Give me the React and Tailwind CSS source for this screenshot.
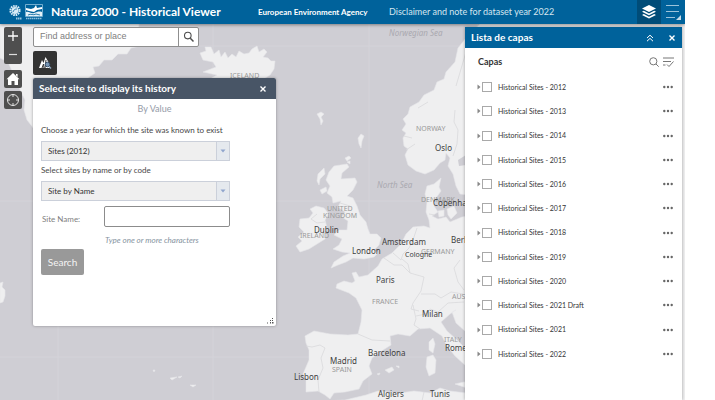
import { useState } from "react";

const UI = "font-['Lato','Open_Sans',sans-serif]";

const LAND = [
  // Greenland
  "M22 24 L139 24 138 34 140 46 131 48 127 54 118 54 112 60 104 60 99 66 93 67 95 73 88 78 86 92 60 100 46 122 36 132 31 125 27 120 24 110 25 100 21 92 16 80 8 62 0 58 0 24Z",
  "M0 283 L3 282 2 287 5 290 5 296 3 302 0 303Z",
  // Iceland
  "M200 53 L206 51 205 47 211 47 214 54 219 50 221 57 225 52 228 58 232 54 236 57 239 51 244 54 249 53 252 49 257 46 259 52 264 49 267 52 263 57 268 58 271 61 275 61 274 69 270 75 262 80 240 88 215 84 210 79 217 75 203 72 216 67 213 62 203 60Z",
  // Faroe, Shetland, Orkney, Azores
  "M317 114 l4 -2 3 2 -3 3 2 4 -2 4 -1 -6z",
  "M358 138 l3 -4 3 2 -2 5 -1 7 -2 -4z",
  "M345 158 l4 -2 2 2 -4 3z M347 162 l3 -1 0 3z",
  "M170 378 l7 -1 -5 3z M178 377 l4 -1 -2 2z M190 385 l6 0 -3 2z M153 370 l2 0 -1 2z",
  // Scandinavia
  "M686 24 L480 24 466 38 458 48 455 62 446 72 444 79 437 82 434 90 424 95 419 102 410 107 408 114 403 119 406 124 402 130 406 133 403 138 404 146 408 149 405 155 408 165 416 171 425 174 434 170 440 163 445 160 446 153 450 158 448 166 453 174 456 186 460 194 480 196 686 190Z",
  // Great Britain
  "M334 166 L347 164 349 167 342 173 341 179 355 178 357 182 353 190 347 196 353 198 357 206 360 215 366 222 368 229 370 234 377 234 381 238 379 245 374 250 378 253 374 257 364 259 353 258 346 262 338 265 331 268 334 262 343 256 350 253 342 252 333 249 339 245 342 239 334 235 339 230 347 230 348 221 342 217 345 212 338 207 341 201 333 203 332 197 327 193 330 186 326 180 329 172Z",
  "M318 174 l6 -6 1 6 -5 5 -1 6 -2 -4z M320 190 l6 -3 1 4 -5 3z",
  // Ireland
  "M310 209 L316 206 324 208 329 214 325 220 327 228 325 239 317 244 309 249 300 252 296 246 302 241 298 237 304 232 299 227 300 219 309 218 313 213Z",
  // Denmark and the continent
  "M427 186 L434 184 441 178 439 187 441 191 436 198 434 206 438 212 432 216 438 219 446 217 450 222 462 217 480 214 480 330 466 332 456 323 452 312 456 310 450 314 441 322 447 331 456 339 469 352 480 360 480 376 466 366 455 356 447 346 442 336 430 328 418 329 410 336 398 334 390 336 391 345 383 350 372 358 369 366 372 374 363 381 359 389 345 392 334 393 330 399 325 395 318 391 306 392 306 380 303 374 309 360 309 350 306 343 305 336 314 331 330 334 348 335 358 334 361 322 362 310 356 298 349 293 336 288 337 284 344 281 352 283 355 281 352 273 356 272 359 277 368 275 378 266 382 259 392 253 401 244 406 234 413 227 424 226 430 228 429 220 426 212 427 202 425 194Z",
  "M447 209 l7 -3 3 7 -6 6 -3 -4z M438 211 l6 -1 0 6 -5 1z",
  // Islands of the Mediterranean
  "M429 342 l4 -4 2 6 -2 9 -4 -3z M427 357 l6 -2 3 5 -1 13 -6 3 -3 -9z",
  "M385 370 l7 -3 2 3 -5 3z M396 366 l3 0 0 2z M377 374 l3 -1 -1 2z M455 384 l9 -2 20 1 -6 9 -14 -5z",
  // North Africa
  "M322 401 L345 400 366 395 378 391 400 393 414 391 430 393 440 388 450 391 466 393 480 401Z",
  "M679 24 L686 24 686 401 679 401Z",
];

const BORDERS =
  "M455 110 l-1 12 4 8 -1 14 -4 12 M317 214 l-6 5 6 4 8 -1 M340 203 l10 3 M384 258 l10 7 8 0 8 8 14 4 -3 14 -8 12 -2 6 8 2 M393 253 l8 7 2 -6 6 -6 4 -8 4 -12 M410 273 l-2 -9 -6 -5 M421 294 l14 0 6 4 10 -6 12 2 M413 305 l3 14 -2 6 6 4 M416 316 l10 -2 4 -5 8 3 10 -9 16 -1 M460 260 l-6 8 4 14 6 8 M306 346 l6 1 8 -2 5 3 -4 10 2 10 -5 12 1 12 M358 334 l14 6 18 1 M424 392 l-2 9 M478 24 l-12 28 -10 34 M429 214 l6 1 M418 108 l10 -6 M404 136 l8 2 M406 150 l9 -6";

const COUNTRIES = [
  ["ICELAND", 230, 78], ["NORWAY", 416, 131], ["UNITED", 327, 211], ["KINGDOM", 323, 218],
  ["IRELAND", 300, 238], ["DENMARK", 421, 202], ["GERMANY", 421, 254], ["FRANCE", 372, 304],
  ["AUSTRIA", 452, 299], ["ITALY", 444, 342], ["SPAIN", 332, 372],
];

const CITIES = [
  ["Oslo", 435, 151], ["Copenhagen", 433, 206], ["Dublin", 314, 233], ["London", 352, 254],
  ["Amsterdam", 382, 245], ["Berlin", 451, 243], ["Paris", 376, 283], ["Milan", 422, 317],
  ["Rome", 445, 351], ["Barcelona", 368, 356], ["Madrid", 330, 364], ["Lisbon", 294, 380],
  ["Algiers", 378, 397], ["Tunis", 430, 397],
];

const LAYERS = [
  "2012", "2013", "2014", "2015", "2016", "2017", "2018", "2019", "2020", "2021 Draft", "2021", "2022",
];

function BaseMap() {
  return (
    <svg
      className="absolute inset-0 h-full w-full font-['Noto_Sans',sans-serif]"
      viewBox="0 24 685 376"
      preserveAspectRatio="xMidYMin slice"
      aria-label="Map of Europe"
    >
      <rect y="24" width="685" height="376" fill="#cfced4" />
      <path d="M58 24V400M213 24V400M369 24V400M0 46H685M0 201H685M0 357H685" stroke="#d4d3d9" fill="none" />
      {LAND.map((d) => (
        <path key={d} d={d} fill="#efeff0" stroke="#e6e6e9" strokeWidth="0.6" strokeLinejoin="round" />
      ))}
      <path d={BORDERS} fill="none" stroke="#d9d9dc" strokeWidth="0.8" strokeLinejoin="round" />
      <path d="M458 160 l8 -5 v10 l-7 1z" fill="#cfced4" />
      <g fontSize="7" fill="#999">
        {COUNTRIES.map(([name, x, y]) => (
          <text key={name} x={x} y={y}>{name}</text>
        ))}
      </g>
      <g fontSize="8" fill="#aaa9b0" fontStyle="italic">
        <text x="389" y="36">Norwegian Sea</text>
        <text x="377" y="188">North Sea</text>
      </g>
      <g fontSize="8" fill="#404040">
        {CITIES.map(([name, x, y]) => (
          <text key={name} x={x} y={y}>{name}</text>
        ))}
        <text x="405" y="257" fontSize="7">Cologne</text>
      </g>
    </svg>
  );
}

function Logos() {
  return (
    <svg className="h-4 w-9 shrink-0" viewBox="0 0 36 16" fill="none" aria-label="EEA and Natura 2000">
      <circle cx="7" cy="6.500" r="4.600" stroke="#d9ecf7" strokeWidth="2" strokeDasharray="1.600 0.800" />
      <circle cx="7" cy="6.500" r="3.400" fill="#d9ecf7" />
      <path d="M5 8c1-3 3-3 4-3" stroke="#00629b" strokeWidth="0.800" />
      <path d="M8 14.500h6" stroke="#9cc6de" strokeWidth="1.800" strokeDasharray="1.500 0.500" />
      <path d="M17.500 0.500h17v12h-17z" stroke="#8fc0dc" strokeWidth="0.800" />
      <path d="M18 4l5 1 3-1 2-3 1 3 5-1v2l-5 1-3 2-5-1-3-1z" fill="#fff" />
      <path d="M18 8c3-1 5 2 8 1s5-2 8-1v4H18z" fill="#e4f1f8" />
      <path d="M20 11c3-2 5 1 8-1l4 1" stroke="#00629b" strokeWidth="0.800" />
      <path d="M18 14.500h16" stroke="#8fc0dc" strokeWidth="1.600" strokeDasharray="1.500 0.500" />
    </svg>
  );
}

function Header() {
  return (
    <header className={`${UI} relative z-10 flex h-6 shrink-0 items-center bg-[#00629b] text-white shadow-[0_1px_3px_#0006]`}>
      <div className="flex w-[51px] shrink-0 pl-2"><Logos /></div>
      <h1 className="w-[207px] shrink-0 whitespace-nowrap text-[12px] font-bold leading-6">Natura 2000 - Historical Viewer</h1>
      <a href="#eea" className="w-[131px] shrink-0 whitespace-nowrap text-[8px] font-bold leading-6">European Environment Agency</a>
      <a href="#disclaimer" className="whitespace-nowrap text-[9px] leading-6 text-[#d5e6f0]">Disclaimer and note for dataset year 2022</a>
      <button aria-label="Layers" className="ml-auto flex h-6 w-6 shrink-0 items-center justify-center bg-[#004c78]">
        <svg className="h-4 w-4" viewBox="0 0 16 16" fill="#fff">
          <path d="M8 1l7 3.500-7 3.500-7-3.500z" />
          <path d="M2.800 6.800L1 7.700l7 3.600 7-3.600-1.800-.9L8 9.500z" />
          <path d="M2.800 10L1 11l7 3.600L15 11l-1.800-1L8 12.700z" />
        </svg>
      </button>
      <button aria-label="Menu" className="flex h-6 w-6 shrink-0 items-center justify-center">
        <svg className="h-4 w-4" viewBox="0 0 16 16">
          <path d="M1 1.500h13M1 7.500h13M1 13.500h9" stroke="#9cc3da" strokeWidth="1.200" />
          <path d="M16 11v5h-5z" fill="#c5dce9" />
        </svg>
      </button>
    </header>
  );
}

function MapControls() {
  const box = "flex w-[18px] items-center justify-center rounded-xs bg-[#4f4f4f]";
  return (
    <div className="flex shrink-0 flex-col">
      <button aria-label="Zoom in" className="flex h-[18px] w-[18px] items-center justify-center rounded-t-xs bg-[#4f4f4f]">
        <svg className="h-3 w-3" viewBox="0 0 12 12"><path d="M1 6h10M6 1v10" stroke="#fff" strokeWidth="1.300" /></svg>
      </button>
      <button aria-label="Zoom out" className="mb-1.5 flex h-[19px] w-[18px] items-center justify-center rounded-b-xs bg-[#4f4f4f]">
        <svg className="h-3 w-3" viewBox="0 0 12 12"><path d="M2 5.500h8" stroke="#ddd" strokeWidth="1.200" /></svg>
      </button>
      <button aria-label="Home" className={`${box} mb-[3px] h-[18px]`}>
        <svg className="h-3.5 w-3.5" viewBox="0 0 14 14" fill="#fff"><path d="M7 1l6.500 6.200H12V13H8.500V9h-3v4H2V7.200H.5z" /><path d="M10 2h1.600v3L10 3.500z" /></svg>
      </button>
      <button aria-label="My location" className={`${box} h-[18px]`}>
        <svg className="h-3.5 w-3.5" viewBox="0 0 14 14" fill="none" stroke="#e4e4e4"><circle cx="7" cy="7" r="5.500" /><path d="M7 1v3M7 10v3M1 7h3M10 7h3" /></svg>
      </button>
    </div>
  );
}

function SearchBox() {
  return (
    <form className="flex h-5 w-[166px] rounded-xs border border-[#8f8f8f] bg-white" onSubmit={(e) => e.preventDefault()}>
      <input
        aria-label="Find address or place"
        placeholder="Find address or place"
        className="min-w-0 flex-1 px-1.5 font-['Liberation_Sans',sans-serif] text-[9px] outline-none placeholder:text-[#808080]"
      />
      <button aria-label="Search address" className="flex w-5 items-center justify-center border-l border-[#8f8f8f]">
        <svg className="h-3 w-3" viewBox="0 0 12 12" fill="none" stroke="#4c4c4c"><circle cx="4.800" cy="4.600" r="3.300" strokeWidth="1.100" /><path d="M7.300 7.200l3.200 3.300" strokeWidth="1.500" /></svg>
      </button>
    </form>
  );
}

function SelectField({ id, label, option }) {
  return (
    <div className="flex flex-col">
      <label htmlFor={id} className="h-[19px] whitespace-nowrap text-[8px] leading-4 text-[#484848]">{label}</label>
      <div className="relative flex h-5 w-[189px] border border-[#cbd0da] bg-[#efefef]">
        <select id={id} className="min-w-0 flex-1 appearance-none px-1.5 text-[8px] text-[#333] outline-none">
          <option>{option}</option>
        </select>
        <span className="pointer-events-none flex w-[13px] items-center justify-center border-l border-[#cbd0da] bg-[#e5e9ee]">
          <svg className="h-1 w-1.5" viewBox="0 0 6 4"><path d="M0.500 0.500h5L3 3.500z" fill="#90a5cd" /></svg>
        </span>
      </div>
    </div>
  );
}

function HistoryDialog() {
  return (
    <section className={`${UI} flex h-[248px] w-[243px] flex-col overflow-hidden rounded-xs bg-white shadow-[0_0_3px_#0005]`}>
      <header className="flex h-[21px] shrink-0 items-center justify-between bg-[#485566] pl-1.5 pr-[5px] text-white">
        <h2 className="text-[10px] font-bold">Select site to display its history</h2>
        <button aria-label="Close dialog" className="flex h-4 w-4 items-center justify-center">
          <svg className="h-2 w-2" viewBox="0 0 8 8"><path d="M1.500 1.500l5 5M6.500 1.500l-5 5" stroke="#fff" strokeWidth="1.400" /></svg>
        </button>
      </header>
      <p className="h-[23px] shrink-0 pt-0.5 text-center text-[9px] leading-4 text-[#959ba8]">By Value</p>
      <form className="flex flex-col gap-px px-2" onSubmit={(e) => e.preventDefault()}>
        <SelectField id="year" label="Choose a year for which the site was known to exist" option="Sites (2012)" />
        <SelectField id="mode" label="Select sites by name or by code" option="Site by Name" />
        <div className="mt-1 flex items-center">
          <label htmlFor="site-name" className="w-[63px] pl-px pt-1 text-[8px] text-[#808080]">Site Name:</label>
          <input id="site-name" className="h-[21px] w-[126px] rounded-xs border border-[#8c8c8c] px-1 text-[8px] outline-none" />
        </div>
        <p className="ml-16 mt-1 h-4 text-[8px] italic leading-4 text-[#8593a0]">Type one or more characters</p>
        <button className="h-[26px] w-[43px] rounded-xs bg-[#999] text-[10px] text-[#f4f4f4]">Search</button>
      </form>
      <svg className="ml-auto mr-0.5 mt-auto mb-0.5 h-1.5 w-2" viewBox="0 0 8 6" fill="#555">
        <path d="M6 0h1v1H6zM6 2h1v1H6zM6 4h1.500v1.500H6zM4 2h1v1H4zM4 4h1v1.500H4zM1 4.500h1v1H1z" />
      </svg>
    </section>
  );
}

function LayerRow({ year }) {
  const [on, setOn] = useState(false);
  const id = `layer-${year.replace(" ", "-")}`;
  return (
    <li className="flex items-center">
      <button aria-label={`Expand ${year}`} className="flex h-4 w-[5px] items-center">
        <svg className="h-1.5 w-1" viewBox="0 0 4 6"><path d="M0.500 0.500v5L3.500 3z" fill="#888" /></svg>
      </button>
      <input
        id={id}
        type="checkbox"
        checked={on}
        onChange={() => setOn(!on)}
        className="h-2.5 w-2.5 shrink-0 appearance-none border border-[#a9a9a9] bg-white checked:bg-[#00629b]"
      />
      <label htmlFor={id} className="flex-1 pl-1.5 text-[7px] text-[#333]">Historical Sites - {year}</label>
      <button aria-label={`Options for ${year}`} className="flex h-4 w-2.5 items-center">
        <svg className="h-1 w-2.5" viewBox="0 0 10 4" fill="#666"><circle cx="1.300" cy="2" r="1.200" /><circle cx="5" cy="2" r="1.200" /><circle cx="8.700" cy="2" r="1.200" /></svg>
      </button>
    </li>
  );
}

function LayerPanel() {
  return (
    <aside className={`${UI} ml-auto flex w-[217px] shrink-0 flex-col bg-white shadow-[0_0_3px_#0005]`}>
      <header className="flex h-[21px] shrink-0 items-center bg-[#00629b] pl-1.5 pr-[5px] text-white">
        <h2 className="flex-1 text-[10px] font-bold">Lista de capas</h2>
        <button aria-label="Collapse" className="mr-3 flex h-4 w-2.5 items-center justify-center">
          <svg className="h-2 w-2" viewBox="0 0 8 8" fill="none" stroke="#fff"><path d="M1 4l3-2.800L7 4M1 7.200l3-2.800 3 2.800" /></svg>
        </button>
        <button aria-label="Close panel" className="flex h-4 w-2.5 items-center justify-center">
          <svg className="h-2 w-2" viewBox="0 0 8 8"><path d="M1.500 1.500l5 5M6.500 1.500l-5 5" stroke="#fff" strokeWidth="1.400" /></svg>
        </button>
      </header>
      <div className="flex h-[27px] shrink-0 items-center gap-1 pl-[13px] pr-2">
        <h3 className="flex-1 text-[9px] font-bold text-[#333]">Capas</h3>
        <button aria-label="Search layers">
          <svg className="h-2.5 w-2.5" viewBox="0 0 10 10" fill="none" stroke="#777"><circle cx="4.300" cy="4.300" r="3.600" /><path d="M7 7l2.700 2.700" /></svg>
        </button>
        <button aria-label="Filter layers">
          <svg className="h-2.5 w-[11px]" viewBox="0 0 11 10" fill="none" stroke="#777"><path d="M0 1h11M0 4.500h8M0 8h2.500M4 7.500l2 2L10.500 4.500" /></svg>
        </button>
      </div>
      <ul className="grid h-[291px] shrink-0 auto-rows-fr pl-3 pr-[9px]">
        {LAYERS.map((year) => <LayerRow key={year} year={year} />)}
      </ul>
    </aside>
  );
}

export default function App() {
  return (
    <div className="flex h-screen bg-white pr-[30px]">
      <div className="flex min-w-0 flex-1 flex-col overflow-hidden">
        <Header />
        <main className="relative flex min-h-0 flex-1">
          <BaseMap />
          <div className="relative flex min-w-0 flex-1 pl-1 pr-[3px] pt-[3px]">
            <MapControls />
            <div className="ml-[11px] flex flex-col items-start">
              <SearchBox />
              <button aria-label="Site history" className="mb-[3px] mt-1 flex h-6 w-6 items-center justify-center rounded-xs bg-[#333]">
                <svg className="h-4 w-4" viewBox="0 0 16 16">
                  <path d="M2 13L5 5l1.500 3L8.500 2 12 8l1 5z" fill="#fff" />
                  <path d="M5 13l1.500-4L7 13M9 5l-1 8" stroke="#333" fill="none" />
                  <circle cx="10.500" cy="9.500" r="2.300" fill="#7896b4" stroke="#38506c" /><path d="M12 11.500l2 2" stroke="#8fa8c2" strokeWidth="1.400" />
                </svg>
              </button>
              <HistoryDialog />
            </div>
            <LayerPanel />
          </div>
        </main>
      </div>
    </div>
  );
}
